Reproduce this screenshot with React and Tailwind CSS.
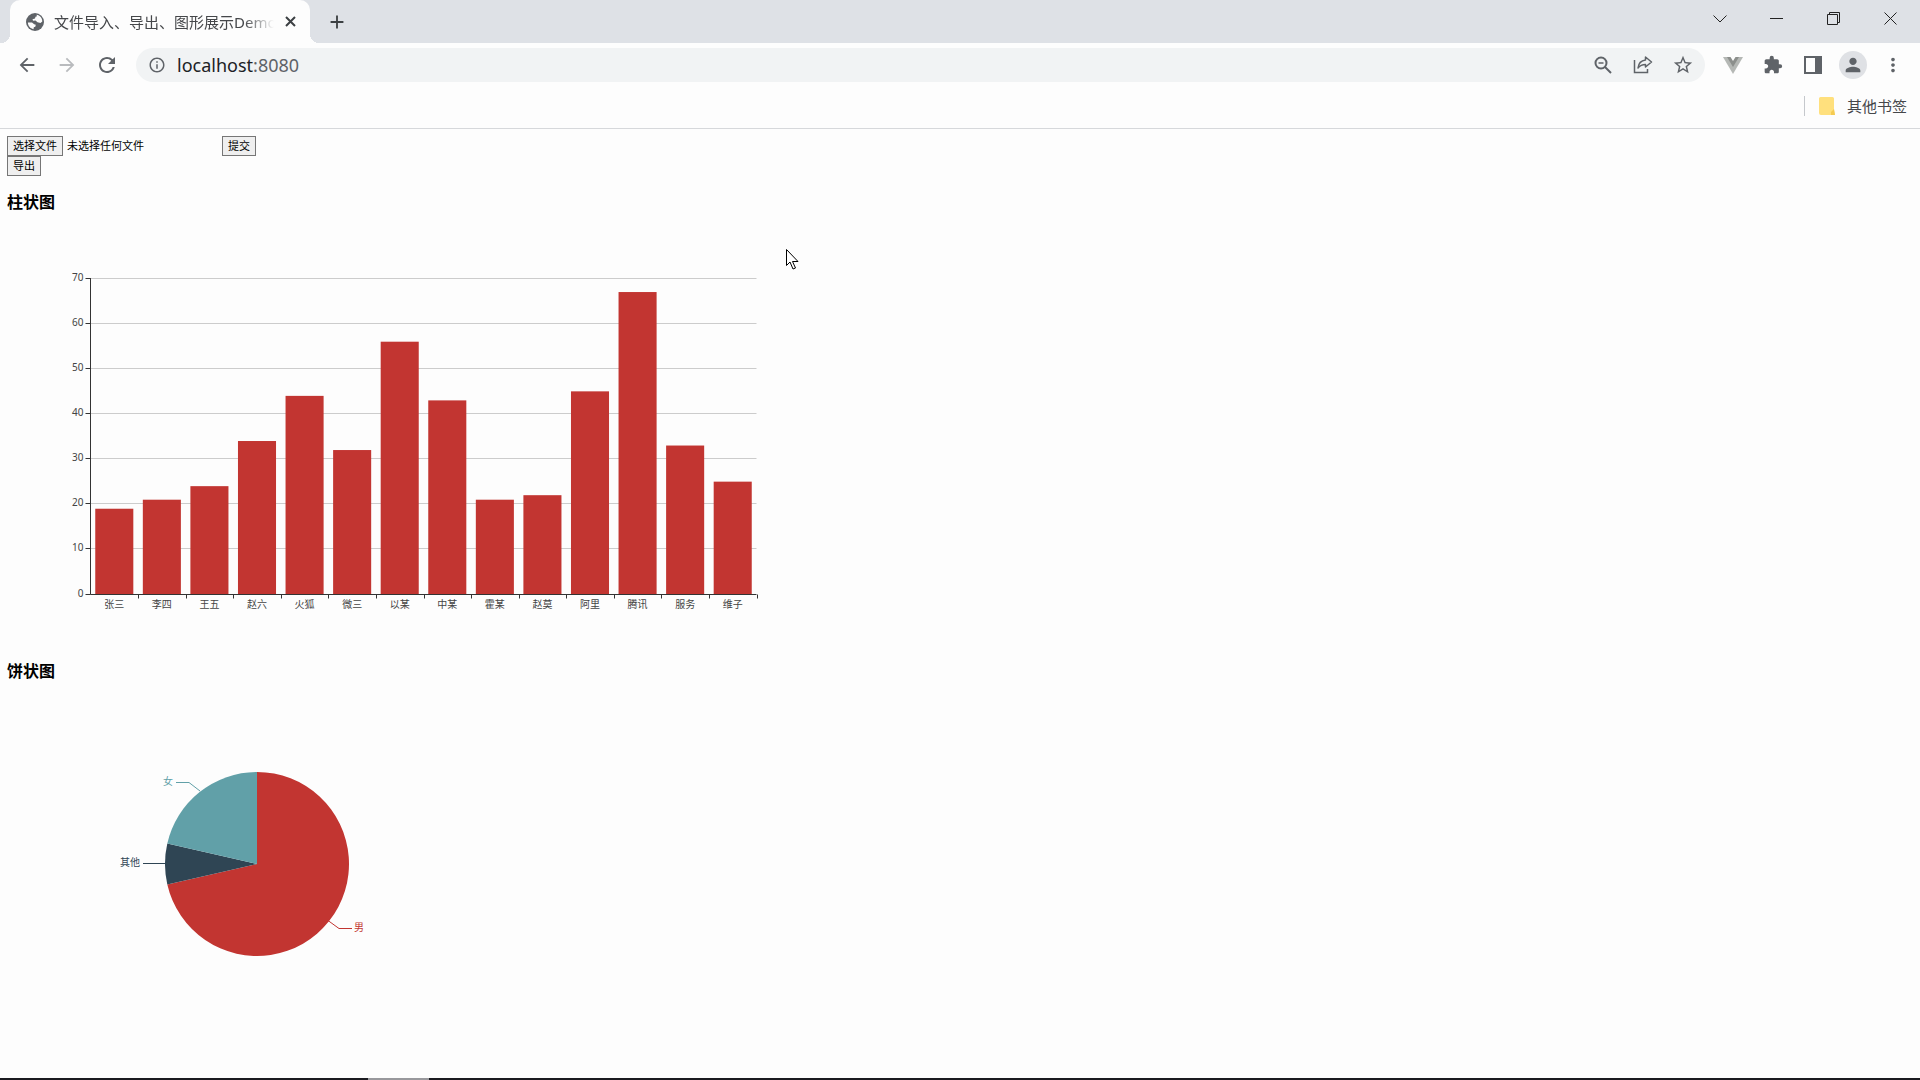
import React from "react";
import {
  MdAdd, MdArrowBack, MdArrowForward, MdRefresh, MdInfoOutline,
  MdExtension, MdMoreVert, MdPerson, MdStarBorder,
} from "react-icons/md";

const people = [
  ["张三", 19], ["李四", 21], ["王五", 24], ["赵六", 34], ["火狐", 44], ["微三", 32], ["以某", 56],
  ["中某", 43], ["霍某", 21], ["赵莫", 22], ["阿里", 45], ["腾讯", 67], ["服务", 33], ["维子", 25],
];

function TabStrip() {
  return (
    <header className="flex h-[43px] items-stretch bg-[#dee1e6] pl-[10px]">
      <div className="relative flex w-[300px] items-center rounded-t-[10px] bg-[#fdfdfd] pl-4 pr-3">
        <span className="absolute -left-[9px] bottom-0 h-[9px] w-[9px] bg-[radial-gradient(circle_at_0_0,#dee1e6_9px,#fdfdfd_9px)]" />
        <span className="absolute -right-[9px] bottom-0 h-[9px] w-[9px] bg-[radial-gradient(circle_at_100%_0,#dee1e6_9px,#fdfdfd_9px)]" />
        <svg className="mr-[10px] shrink-0" width="18" height="18">
          <circle cx="9" cy="9" r="9" fill="#5f6368" />
          <path d="M10.500 1.800C14 2.300 16.300 5.200 16.300 8.600L14.500 10 11.500 9.200 9.500 7.500 7 7.800 6.500 6.200 9 5.500 9.500 3.800 11 3.200z" fill="#fdfdfd" />
          <path d="M1.900 9.500 6 9.500 8.200 11.200 9.800 11.800 9.300 13.800 7.800 14.200 7.500 16.200C4.300 15.600 1.900 12.800 1.900 9.500z" fill="#fdfdfd" />
        </svg>
        <span className="whitespace-nowrap text-[15px] leading-6 text-[#45474a] [mask-image:linear-gradient(to_right,#000_190px,transparent_220px)]">
          文件导入、导出、图形展示Demo
        </span>
        <button aria-label="关闭标签页" className="absolute right-[14px]">
          <svg width="11" height="11" stroke="#3c4043" strokeWidth="2"><path d="M1 1l9 9M10 1l-9 9" /></svg>
        </button>
      </div>
      <button aria-label="新标签页" className="ml-4 flex items-center"><MdAdd className="h-[22px] w-[22px] text-[#3c4043]" /></button>
      <div className="ml-auto flex items-center pb-[6px] pr-px text-[#222]">
        <button aria-label="搜索标签页" className="flex w-[57px] justify-center">
          <svg width="14" height="8" fill="none" stroke="currentColor"><path d="M.5 .5 7 7 13.500 .5" /></svg>
        </button>
        <button aria-label="最小化" className="flex w-[57px] justify-center">
          <svg width="13" height="13" stroke="currentColor"><path d="M0 6.500h13" /></svg>
        </button>
        <button aria-label="还原" className="flex w-[57px] justify-center">
          <svg width="13" height="13" fill="none" stroke="currentColor"><path d="M.5 2.500h10v10H.5zM2.500 2.500v-2h10v10h-2" /></svg>
        </button>
        <button aria-label="关闭" className="flex w-[57px] justify-center">
          <svg width="13" height="13" fill="none" stroke="currentColor"><path d="M.5 .5l12 12M12.500 .5l-12 12" /></svg>
        </button>
      </div>
    </header>
  );
}

function Toolbar() {
  return (
    <nav className="flex h-[43px] items-center pr-[7px] text-[#5f6368]">
      <div className="flex w-[136px] shrink-0 items-center pl-[7px]">
        <button aria-label="后退" className="flex w-10 justify-center"><MdArrowBack className="h-[22px] w-[22px]" /></button>
        <button aria-label="前进" className="flex w-10 justify-center text-[#b9bbbe]"><MdArrowForward className="h-[22px] w-[22px]" /></button>
        <button aria-label="重新加载" className="flex w-10 justify-center"><MdRefresh className="h-6 w-6" /></button>
      </div>
      <div className="flex h-[34px] flex-1 items-center rounded-full bg-[#f1f3f4] pl-3 pr-[2px]">
        <MdInfoOutline className="h-[18px] w-[18px]" />
        <a href="#top" className="ml-[11px] flex-1 text-[18px] leading-6 text-[#5f6368]">
          <span className="text-[#202124]">localhost</span>:8080
        </a>
        <button aria-label="缩放" className="flex w-10 justify-center">
          <svg width="18" height="18" fill="none" stroke="currentColor" strokeWidth="2"><circle cx="7" cy="7" r="5.500" /><path d="m11 11 6 6" /><path d="M4.500 7h5" strokeWidth="1.500" /></svg>
        </button>
        <button aria-label="分享" className="flex w-10 justify-center">
          <svg width="20" height="20" fill="none" stroke="currentColor" strokeWidth="1.500"><path d="M1.500 5v12.500h13V14" /><path d="M12.500 2 18.500 7 12.500 12V9.500C9.500 9.500 7 10.500 5 13 5.500 8.500 8.500 5.500 12.500 5z" strokeLinejoin="round" /></svg>
        </button>
        <button aria-label="收藏" className="flex w-10 justify-center"><MdStarBorder className="h-[22px] w-[22px]" /></button>
      </div>
      <button aria-label="Vue" className="ml-2 flex w-10 justify-center">
        <svg width="20" height="18"><path d="M0 1h20L10 18z" fill="#b5b8b5" /><path d="M4 1h12l-6 10z" fill="#8c8f8c" /><path d="M7.500 1h5L10 5z" fill="#fdfdfd" /></svg>
      </button>
      <button aria-label="扩展程序" className="flex w-10 justify-center"><MdExtension className="h-5 w-5" /></button>
      <button aria-label="侧边栏" className="flex w-10 justify-center">
        <svg width="18" height="18"><path fillRule="evenodd" d="M0 0h18v18H0zM2 2v14h9V2z" fill="currentColor" /></svg>
      </button>
      <button aria-label="个人资料" className="flex w-10 justify-center">
        <span className="flex h-7 w-7 items-center justify-center rounded-full bg-[#dfe1e5]"><MdPerson className="h-[22px] w-[22px]" /></span>
      </button>
      <button aria-label="更多" className="flex w-10 justify-center"><MdMoreVert className="h-[22px] w-[22px]" /></button>
    </nav>
  );
}

function Bookmarks() {
  return (
    <div className="flex h-[43px] items-center justify-end gap-3 border-b border-[#d6d8db] pb-[2px] pr-[13px]">
      <span className="h-5 w-px bg-[#c5c8cc]" />
      <button className="ml-[2px] flex items-center gap-3 text-[15px] leading-6 text-[#45474a]">
        <svg width="16" height="19"><path d="M1.500 0h12q1.500 0 1.500 1.500V13l1 5H2q-2 0-2-2V1.500Q0 0 1.500 0z" fill="#ffe07d" /><path d="M12 18v-3l3-3 1 6z" fill="#f5cb52" /></svg>
        其他书签
      </button>
    </div>
  );
}

function BarChart() {
  const left = 83.5, base = 366.5, width = 666, unit = 316 / 70;
  const step = width / people.length;
  return (
    <svg width="833" height="417" role="img" aria-label="柱状图" fontSize="10" fill="#444">
      {[0, 10, 20, 30, 40, 50, 60, 70].map((v) => {
        const y = Math.round(base - v * unit) - 0.5;
        return (
          <g key={v}>
            {v > 0 && <path d={`M${left} ${y}H${left + width}`} stroke="#ccc" />}
            <path d={`M${left - 5} ${y}h5`} stroke="#333" />
            <text x={left - 7} y={y + 2.5} textAnchor="end">{v}</text>
          </g>
        );
      })}
      {people.map(([name, v], i) => (
        <g key={name}>
          <rect x={left + step * (i + 0.1)} y={base - v * unit} width={step * 0.8} height={v * unit} fill="#c23531" />
          <path d={`M${Math.round(left + step * (i + 1)) + 0.5} ${base}v4`} stroke="#333" />
          <text x={left + step * (i + 0.5)} y={base + 13} textAnchor="middle">{name}</text>
        </g>
      ))}
      <path d={`M${left} 50V${base}H${left + width}`} fill="none" stroke="#333" />
    </svg>
  );
}

function PieChart() {
  const cx = 250, cy = 167, r = 92;
  const at = (share) => {
    const a = share * 2 * Math.PI;
    return `${cx + r * Math.sin(a)} ${cy - r * Math.cos(a)}`;
  };
  const slice = (from, to) => `M${cx} ${cy}L${at(from)}A${r} ${r} 0 ${to - from > 0.5 ? 1 : 0} 1 ${at(to)}Z`;
  return (
    <svg width="500" height="360" role="img" aria-label="饼状图" fontSize="10">
      <path d={slice(0, 10 / 14)} fill="#c23531" />
      <path d={slice(10 / 14, 11 / 14)} fill="#2f4554" />
      <path d={slice(11 / 14, 1)} fill="#61a0a8" />
      <path d="M321 223.500 332 231.500h13" fill="none" stroke="#c23531" />
      <path d="M158 166.500h-22" stroke="#2f4554" />
      <path d="M193 94 182 85.500h-13" fill="none" stroke="#61a0a8" />
      <text x="347" y="234" fill="#c23531">男</text>
      <text x="133" y="169" textAnchor="end" fill="#2f4554">其他</text>
      <text x="166" y="88" textAnchor="end" fill="#61a0a8">女</text>
    </svg>
  );
}

const buttonClass = "flex h-5 cursor-default items-center border border-[#767676] bg-[#efefef] px-[5px] text-[11px] leading-4 text-black";

export default function App() {
  return (
    <div id="top" className="relative flex min-h-screen flex-col bg-[#fdfdfd] font-['Noto_Sans','Noto_Sans_CJK_SC',sans-serif]">
      <TabStrip />
      <Toolbar />
      <Bookmarks />
      <main className="px-[7px] pt-[7px] text-black">
        <form className="flex items-center" onSubmit={(e) => e.preventDefault()}>
          <div className="relative flex w-[215px] items-center gap-1">
            <input id="file" type="file" className="sr-only" />
            <label htmlFor="file" className={buttonClass}>选择文件</label>
            <span className="text-[11px] leading-4">未选择任何文件</span>
          </div>
          <button type="submit" className={buttonClass}>提交</button>
        </form>
        <button type="button" className={buttonClass}>导出</button>
        <h3 className="my-[14px] text-base leading-6 font-bold">柱状图</h3>
        <BarChart />
        <h3 className="my-[14px] text-base leading-6 font-bold">饼状图</h3>
        <PieChart />
      </main>
      <div className="mt-auto flex h-[2px] bg-[#1b1b20]">
        <span className="ml-[368px] w-[61px] bg-[#98989c]" />
      </div>
      <svg className="pointer-events-none absolute left-[786px] top-[249px]" width="13" height="22">
        <path d="M.5 .5v16l3.500-3.500 3 7 2.500-1-3-6.500H12z" fill="#fff" stroke="#000" />
      </svg>
    </div>
  );
}
